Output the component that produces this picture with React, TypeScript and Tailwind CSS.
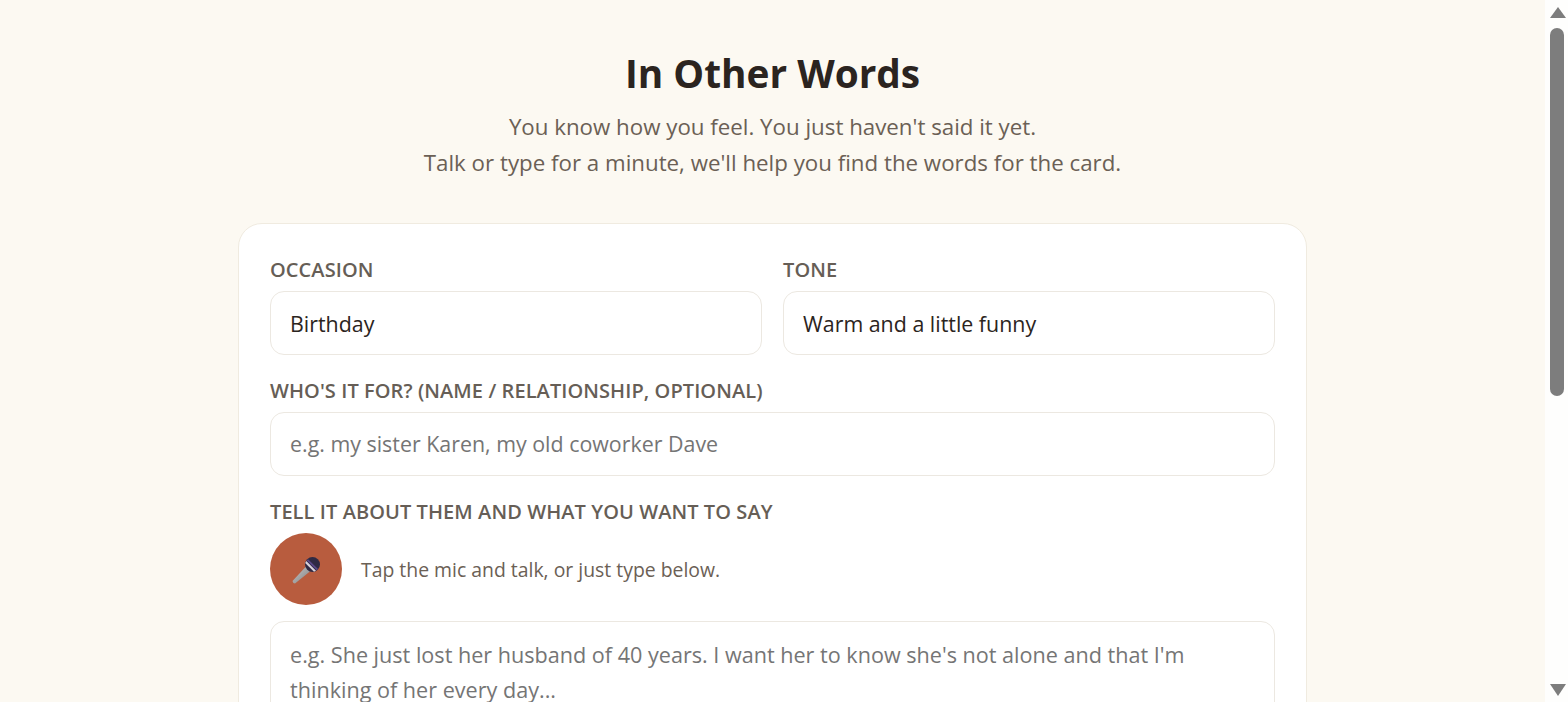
import React from "react";

function Label({ children }: { children: React.ReactNode }) {
  return <label className="block text-[20px] leading-[30px] font-semibold text-[#665e56] uppercase tracking-[0.08px]">{children}</label>;
}

function Box({ value, placeholder }: { value?: string; placeholder?: string }) {
  return (
    <div className={`h-[64px] flex items-center px-[19px] rounded-[14px] border border-[#ece8e1] bg-white text-[21.4px] ${value ? "pt-[2px] text-[#2b2420]" : "text-[#757575]"}`}>
      {value || placeholder}
    </div>
  );
}

export default function App() {
  return (
    <div className="h-[702px] overflow-hidden flex bg-[#fcf9f2]" style={{ fontFamily: '"Open Sans", sans-serif' }}>
      <div className="flex-1 min-w-0 flex flex-col items-center pt-[48px]">
        <h1 className="text-[38.8px] leading-[50px] font-bold text-[#2b2420]">In Other Words</h1>
        <p className="mt-[11px] text-[22.3px] leading-[36px] text-[#6b6055] text-center">You know how you feel. You just haven't said it yet.<br />Talk or type for a minute, we'll help you find the words for the card.</p>
        <div className="mt-[42px] w-[1069px] shrink-0 rounded-[24px] border border-[#f0ebe0] bg-white px-[31px] pt-[31px]">
          <div className="grid grid-cols-2 gap-[21px]">
            <div><Label>Occasion</Label><div className="mt-[6px]"><Box value="Birthday" /></div></div>
            <div><Label>Tone</Label><div className="mt-[6px]"><Box value="Warm and a little funny" /></div></div>
          </div>
          <div className="mt-[21px]"><Label>Who's it for? (name / relationship, optional)</Label><div className="mt-[6px]"><Box placeholder="e.g. my sister Karen, my old coworker Dave" /></div></div>
          <div className="mt-[21px]"><Label>Tell it about them and what you want to say</Label></div>
          <div className="mt-[6px] flex items-center gap-[19px]">
            <div className="w-[72px] h-[72px] rounded-full bg-[#b85c3e] flex items-center justify-center">
              <svg width="32" height="32" viewBox="0 0 32 32">
                <defs>
                  <linearGradient id="h" x1="0" y1="0" x2="1" y2="1"><stop offset="0" stopColor="#c9c9c9" /><stop offset="1" stopColor="#7f7f7f" /></linearGradient>
                </defs>
                <path d="M2.5 28 L16 13.5 L20.5 18 L5 30.5 Q3 30.5 2.5 28Z" fill="url(#h)" />
                <circle cx="22.5" cy="11.5" r="7.5" fill="#2f2a44" />
                <path d="M16.3 8 L26 17.7 L24 18.8 L15.2 10Z" fill="#d8d3dc" />
                <path d="M18 6.2 L28 16 L26.8 17.3 L16.8 7.4Z" fill="#5b4a8a" />
              </svg>
            </div>
            <span className="pt-[2px] text-[19.4px] text-[#6b6055]">Tap the mic and talk, or just type below.</span>
          </div>
          <div className="mt-[16px] h-[200px] rounded-[14px] border border-[#ece8e1] px-[19px] pt-[15px] text-[21.6px] leading-[35px] text-[#757575]">e.g. She just lost her husband of 40 years. I want her to know she's not alone and that I'm<br />thinking of her every day...</div>
        </div>
      </div>
      <div className="w-[23px] shrink-0 bg-[#fefefd] relative flex flex-col items-center justify-between">
        <svg width="16" height="11" viewBox="0 0 16 11" className="mt-[7px] ml-[3px]"><path d="M8 0 L16 11 H0Z" fill="#7d7d7d" /></svg>
        <div className="absolute top-[28px] left-[5px] w-[14px] h-[368px] rounded-full bg-[#7d7d7d]" />
        <svg width="16" height="12" viewBox="0 0 16 12" className="mb-[6px] ml-[3px]"><path d="M8 12 L16 0 H0Z" fill="#7d7d7d" /></svg>
      </div>
    </div>
  );
}
